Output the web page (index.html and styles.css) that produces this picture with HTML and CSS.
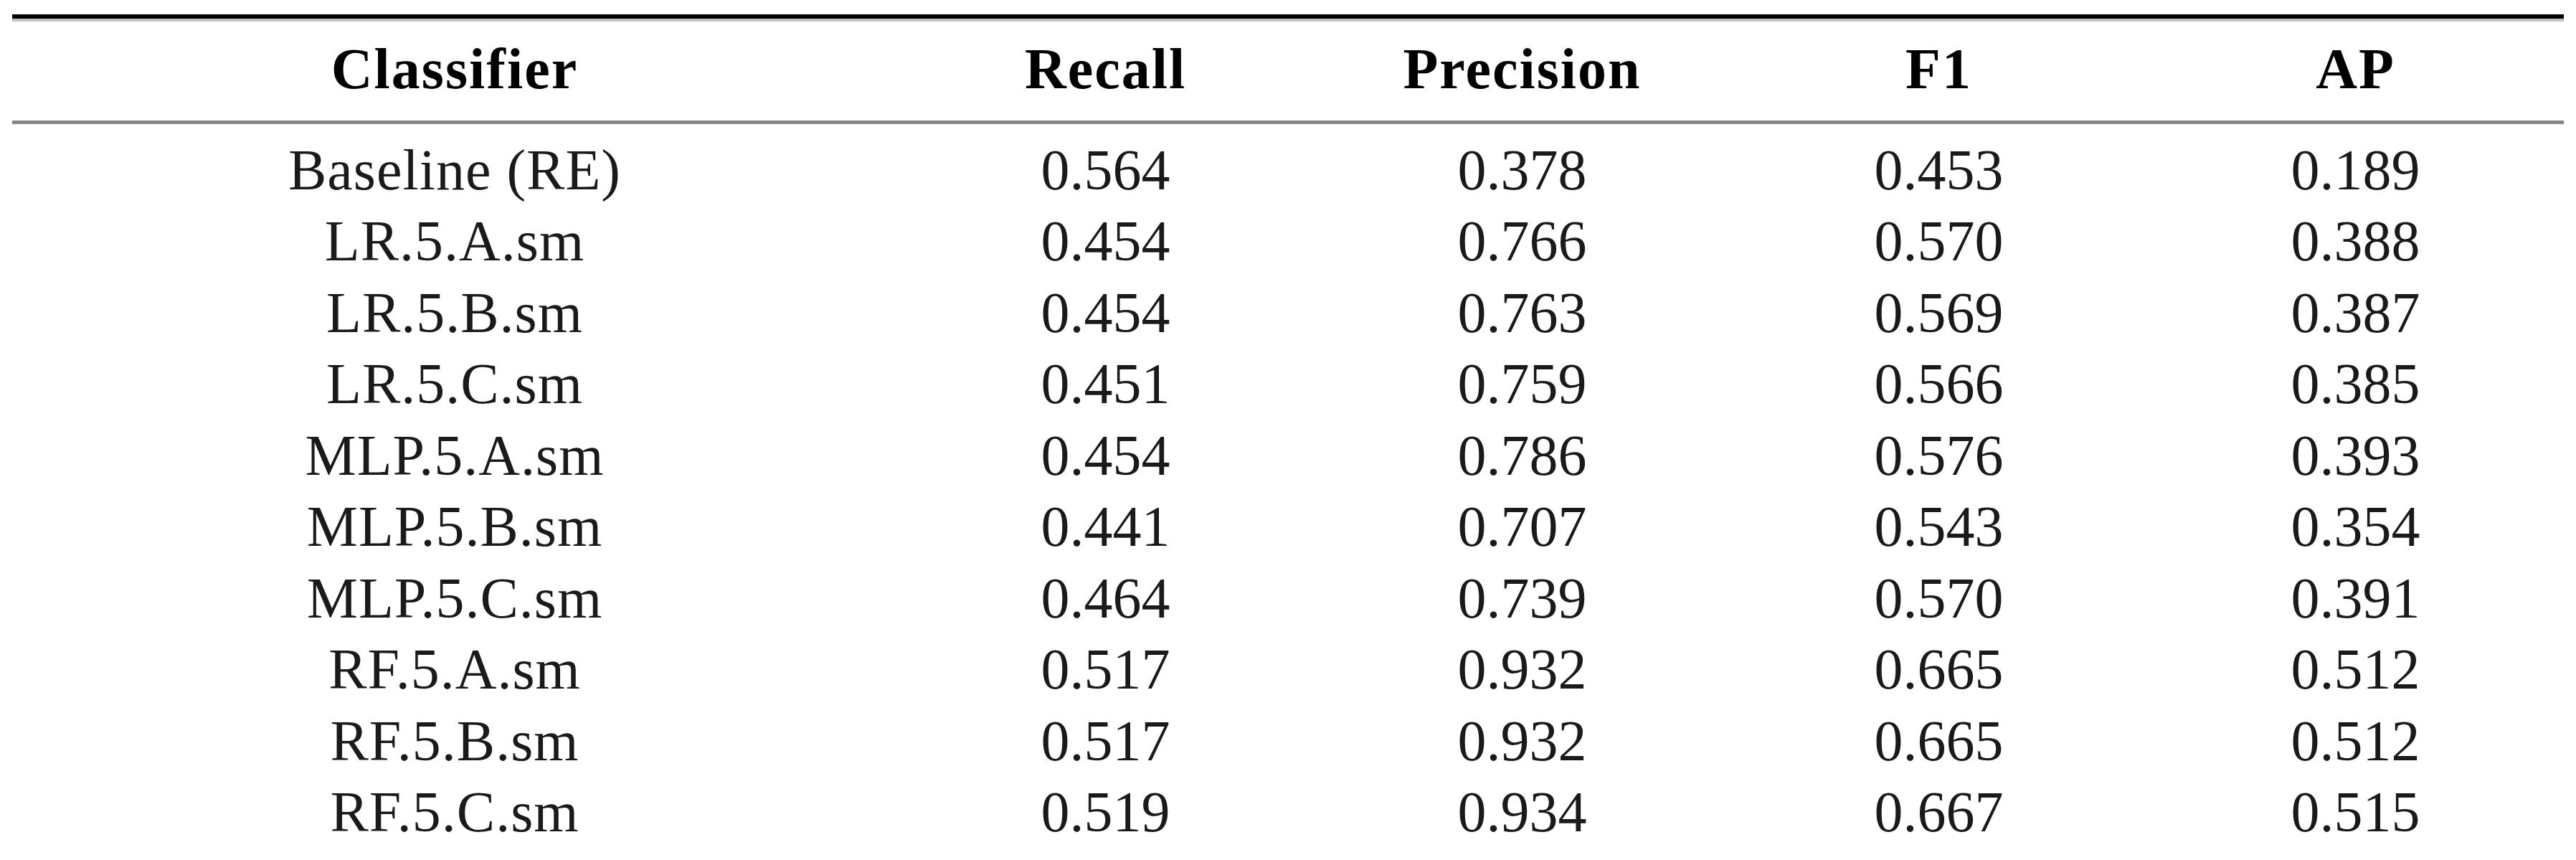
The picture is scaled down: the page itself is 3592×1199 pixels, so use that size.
FILE: index.html
```html
<!DOCTYPE html>
<html>
<head>
    <meta charset="UTF-8">
    <title>Classifier Results</title>
    <link rel="stylesheet" href="styles.css">
</head>
<body>
    <table class="results">
        <colgroup>
            <col class="col-name">
            <col class="col-metric">
            <col class="col-metric">
            <col class="col-metric">
            <col class="col-metric">
        </colgroup>
        <thead>
            <tr>
                <th>Classifier</th>
                <th>Recall</th>
                <th>Precision</th>
                <th>F1</th>
                <th>AP</th>
            </tr>
        </thead>
        <tbody>
            <tr><td class="name">Baseline (RE)</td><td>0.564</td><td>0.378</td><td>0.453</td><td>0.189</td></tr>
            <tr><td class="name">LR.5.A.sm</td><td>0.454</td><td>0.766</td><td>0.570</td><td>0.388</td></tr>
            <tr><td class="name">LR.5.B.sm</td><td>0.454</td><td>0.763</td><td>0.569</td><td>0.387</td></tr>
            <tr><td class="name">LR.5.C.sm</td><td>0.451</td><td>0.759</td><td>0.566</td><td>0.385</td></tr>
            <tr><td class="name">MLP.5.A.sm</td><td>0.454</td><td>0.786</td><td>0.576</td><td>0.393</td></tr>
            <tr><td class="name">MLP.5.B.sm</td><td>0.441</td><td>0.707</td><td>0.543</td><td>0.354</td></tr>
            <tr><td class="name">MLP.5.C.sm</td><td>0.464</td><td>0.739</td><td>0.570</td><td>0.391</td></tr>
            <tr><td class="name">RF.5.A.sm</td><td>0.517</td><td>0.932</td><td>0.665</td><td>0.512</td></tr>
            <tr><td class="name">RF.5.B.sm</td><td>0.517</td><td>0.932</td><td>0.665</td><td>0.512</td></tr>
            <tr><td class="name">RF.5.C.sm</td><td>0.519</td><td>0.934</td><td>0.667</td><td>0.515</td></tr>
        </tbody>
    </table>
</body>
</html>
```

FILE: styles.css
```css
body {
    margin: 0;
    padding: 20px 0 0 17px;
    background-color: #fff;
    font-family: "Liberation Serif", "DejaVu Serif", serif;
    color: #1a1a1a;
}

.results {
    width: 3558px;
    table-layout: fixed;
    border-collapse: separate;
    border-spacing: 0;
    font-size: 80px;
    line-height: 99.5px;
}

.col-name {
    width: 1234px;
}

.col-metric {
    width: 581px;
}

/* top rule: black line with a soft grey edge under it */
.results th {
    padding: 21px 0 21px 0;
    border-top: 6px solid #000;
    border-bottom: 5px solid #868686;
    box-shadow: inset 0 4px 0 #c2c2c2;
    font-weight: bold;
    letter-spacing: 2px;
    color: #000;
    text-align: center;
}

.results td {
    padding: 0;
    text-align: center;
}

.results tbody tr:first-child td {
    padding-top: 15px;
}

.results .name {
    letter-spacing: 1px;
}
```
